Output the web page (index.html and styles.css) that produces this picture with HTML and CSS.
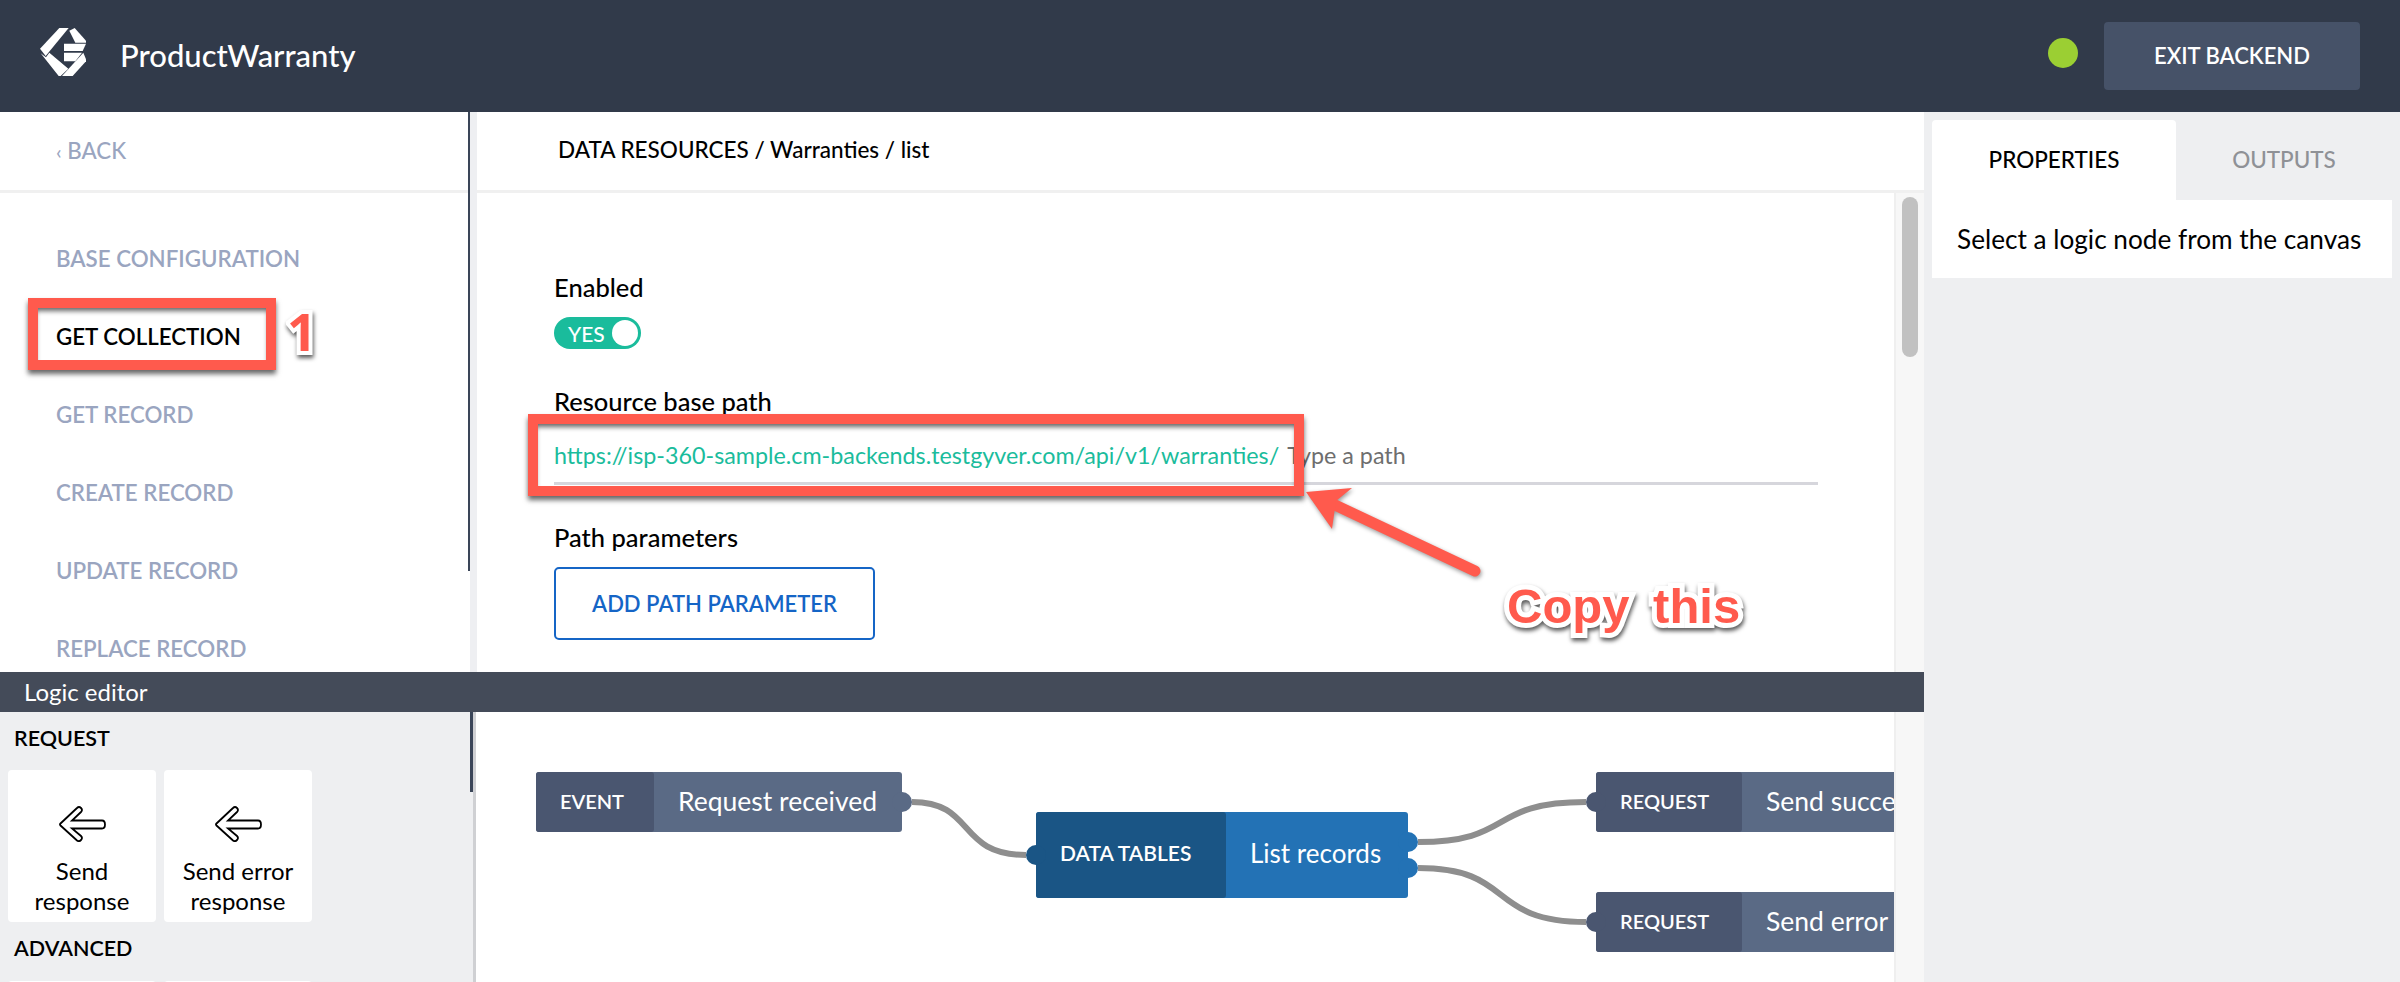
FILE: index.html
```html
<!DOCTYPE html>
<html lang="en">
<head>
    <meta charset="UTF-8">
    <title>ProductWarranty</title>
    <link rel="stylesheet" href="styles.css">
</head>
<body>
    <header class="topbar">
        <svg class="logo" viewBox="120 84 138 144" width="46" height="48" fill="#fff">
            <polygon points="178,84 206,84 137,168 120,146"/>
            <polygon points="122,160 138,172 148,158 205,206 182,228 176,228"/>
            <polygon points="208,92 224,84 258,122 258,128 226,128"/>
            <polygon points="192,131 258,131 248,153 192,153"/>
            <polygon points="192,158 246,158 226,184 192,184"/>
            <polygon points="250,158 258,178 258,184 218,228 186,228"/>
        </svg>
        <div class="app-name">ProductWarranty</div>
        <div class="status-dot"></div>
        <button class="exit-btn">EXIT BACKEND</button>
    </header>

    <div class="workspace">
        <div class="left-col">
            <div class="top-pane">
                <aside class="sidebar">
                    <div class="back-row"><span class="chev">‹</span> BACK</div>
                    <ul class="side-nav">
                        <li>BASE CONFIGURATION</li>
                        <li class="active">GET COLLECTION</li>
                        <li>GET RECORD</li>
                        <li>CREATE RECORD</li>
                        <li>UPDATE RECORD</li>
                        <li>REPLACE RECORD</li>
                    </ul>
                </aside>
                <main class="main">
                    <div class="crumbs">DATA RESOURCES / Warranties / list</div>
                    <div class="main-body">
                        <form class="form">
                            <div class="label">Enabled</div>
                            <div class="toggle"><span>YES</span><i></i></div>
                            <div class="label label-gap">Resource base path</div>
                            <div class="path-row">
                                <span class="path-base">https://isp-360-sample.cm-backends.testgyver.com/api/v1/warranties/</span>
                                <span class="path-hint">Type a path</span>
                            </div>
                            <div class="label label-next">Path parameters</div>
                            <button type="button" class="add-btn">ADD PATH PARAMETER</button>
                        </form>
                        <div class="track"><div class="thumb"></div></div>
                    </div>
                </main>
            </div>

            <div class="logic-bar">Logic editor</div>

            <div class="logic-pane">
                <div class="palette">
                    <h4>REQUEST</h4>
                    <div class="cards">
                        <div class="card">
                            <svg class="arrow-icon" viewBox="0 0 48 36" width="48" height="36"><path d="M19 2 L2.500 17.500 Q1.500 18.500 2.500 19.500 L19 34.500 Q21 36 23 34 Q25 32 23 30 L14 22.500 L44 22.500 Q47 22.500 47 18.500 Q47 14.500 44 14.500 L14 14.500 L23 6 Q25 4 23 2 Q21 0 19 2 Z" fill="#fff" stroke="#000" stroke-width="1.800"/></svg>
                            <div>Send<br>response</div>
                        </div>
                        <div class="card">
                            <svg class="arrow-icon" viewBox="0 0 48 36" width="48" height="36"><path d="M19 2 L2.500 17.500 Q1.500 18.500 2.500 19.500 L19 34.500 Q21 36 23 34 Q25 32 23 30 L14 22.500 L44 22.500 Q47 22.500 47 18.500 Q47 14.500 44 14.500 L14 14.500 L23 6 Q25 4 23 2 Q21 0 19 2 Z" fill="#fff" stroke="#000" stroke-width="1.800"/></svg>
                            <div>Send error<br>response</div>
                        </div>
                    </div>
                    <h4>ADVANCED</h4>
                    <div class="cards">
                        <div class="card"></div>
                        <div class="card"></div>
                    </div>
                </div>
                <div class="canvas">
                    <svg class="wires" width="1418" height="270">
                        <path d="M436 90 C500 90 480 143 550 143"/>
                        <path d="M942 130 C1040 130 1010 90 1110 90"/>
                        <path d="M942 156 C1040 156 1010 210 1110 210"/>
                    </svg>
                    <div class="node node-event">
                        <div class="node-kind">EVENT</div>
                        <div class="node-name">Request received</div>
                        <b class="port port-r"></b>
                    </div>
                    <div class="node node-data">
                        <div class="node-kind">DATA TABLES</div>
                        <div class="node-name">List records</div>
                        <b class="port port-l"></b>
                        <b class="port port-r1"></b>
                        <b class="port port-r2"></b>
                    </div>
                    <div class="node node-ok">
                        <div class="node-kind">REQUEST</div>
                        <div class="node-name">Send success response</div>
                        <b class="port port-l"></b>
                    </div>
                    <div class="node node-err">
                        <div class="node-kind">REQUEST</div>
                        <div class="node-name">Send error response</div>
                        <b class="port port-l"></b>
                    </div>
                </div>
                <div class="track track-low"></div>
            </div>
        </div>

        <aside class="right-col">
            <div class="tabs">
                <div class="tab tab-on">PROPERTIES</div>
                <div class="tab">OUTPUTS</div>
            </div>
            <div class="tab-body">Select a logic node from the canvas</div>
        </aside>
    </div>

    <!-- annotations drawn on top of the screenshot -->
    <div class="mark mark-nav"></div>
    <div class="mark mark-url"></div>
    <div class="note note-one">1</div>
    <div class="note note-copy">Copy this</div>
    <svg class="pointer" width="200" height="110" viewBox="1290 480 200 110">
        <path d="M1475 571 L1335 505" stroke="#ff5a4d" stroke-width="11" stroke-linecap="round" fill="none"/>
        <polygon points="1306,492 1352,488 1336,501 1332,529" fill="#ff5a4d"/>
    </svg>
</body>
</html>
```

FILE: styles.css
```css
* {
    margin: 0;
    padding: 0;
    box-sizing: border-box;
    list-style: none;
}
html, body {
    height: 982px;
    overflow: hidden;
}
body {
    font-family: "Lato", "Liberation Sans", sans-serif;
    color: #000;
    background: #fff;
    display: flex;
    flex-direction: column;
}

/* top bar */
.topbar {
    height: 112px;
    flex: none;
    background: #313a4a;
    display: flex;
    align-items: center;
    padding: 0 40px;
}
.logo {
    margin-top: -8px;
}
.app-name {
    margin: -3px 0 0 34px;
    flex: 1;
    font-size: 31px;
    font-weight: 500;
    color: #fff;
}
.status-dot {
    width: 30px;
    height: 30px;
    border-radius: 50%;
    background: #9bcf33;
    margin: -6px 26px 0 0;
}
.exit-btn {
    width: 256px;
    height: 68px;
    margin-top: -1px;
    border: 0;
    border-radius: 4px;
    background: #465268;
    color: #fff;
    font: 600 22px "Lato", sans-serif;
}

.workspace {
    flex: 1;
    display: flex;
    min-height: 0;
}
.left-col {
    width: 1924px;
    display: flex;
    flex-direction: column;
}
.right-col {
    flex: 1;
    background: #eeeff1;
    padding: 8px 8px 0;
}

/* form pane */
.top-pane {
    height: 560px;
    display: flex;
    background: #eeeff2;
    overflow: hidden;
}
.sidebar {
    width: 470px;
    height: 560px;
    flex: none;
    background: #fff;
    position: relative;
    overflow: hidden;
}
.sidebar::after {
    content: "";
    position: absolute;
    right: 0;
    top: 0;
    width: 2px;
    height: 459px;
    background: #3a4558;
}
.back-row {
    height: 81px;
    padding: 0 0 3px 56px;
    border-bottom: 3px solid #f0f0f0;
    line-height: 77px;
    font-size: 22.300px;
    font-weight: 500;
    color: #9aa5c0;
}
.chev {
    font-size: 20px;
}
.side-nav {
    padding-top: 27px;
}
.side-nav li {
    height: 78px;
    line-height: 78px;
    padding-left: 56px;
    font-size: 22.300px;
    font-weight: 600;
    color: #9aa5c0;
}
.side-nav li.active {
    color: #000;
}
.main {
    margin-left: 7px;
    flex: 1;
    background: #fff;
    display: flex;
    flex-direction: column;
}
.crumbs {
    height: 81px;
    flex: none;
    padding-left: 81px;
    border-bottom: 3px solid #f0f0f0;
    line-height: 76px;
    font-size: 22.500px;
    font-weight: 500;
}
.main-body {
    flex: 1;
    display: flex;
    min-height: 0;
}
.form {
    flex: 1;
    padding: 79px 0 0 77px;
}
.label {
    height: 30px;
    line-height: 30px;
    font-size: 25.500px;
    font-weight: 500;
}
.label-gap {
    margin-top: 37px;
}
.label-next {
    margin-top: 37px;
}
.toggle {
    width: 87px;
    height: 32px;
    margin-top: 15px;
    border-radius: 16px;
    background: #1abc9c;
    display: flex;
    align-items: center;
    justify-content: space-between;
    padding: 0 3px 0 14px;
    color: #fff;
    font-size: 21px;
    font-weight: 500;
}
.toggle i {
    width: 26px;
    height: 26px;
    border-radius: 50%;
    background: #fff;
}
.path-row {
    width: 1264px;
    height: 69px;
    border-bottom: 3px solid #d6d6dc;
    padding-top: 24px;
    line-height: 30px;
    font-size: 23.300px;
    white-space: nowrap;
}
.path-base {
    color: #1abc9c;
}
.path-hint {
    color: #6e6e6e;
    margin-left: 2px;
}
.add-btn {
    display: block;
    width: 321px;
    height: 73px;
    margin-top: 15px;
    border: 2px solid #1565c6;
    border-radius: 5px;
    background: #fff;
    color: #1565c6;
    font: 600 22px "Lato", sans-serif;
}
.track {
    width: 30px;
    flex: none;
    background: #f7f7f7;
    border-left: 2px solid #efefef;
    padding: 4px 0 0 6px;
}
.thumb {
    width: 16px;
    height: 160px;
    border-radius: 8px;
    background: #c1c1c1;
}

/* logic editor */
.logic-bar {
    height: 40px;
    flex: none;
    background: #444b59;
    color: #fff;
    padding-left: 24px;
    line-height: 40px;
    font-size: 24px;
}
.logic-pane {
    flex: 1;
    display: flex;
    min-height: 0;
}
.palette {
    width: 476px;
    flex: none;
    background: #eeeff1;
    position: relative;
    overflow: hidden;
    border-right: 3px solid #cfd0d3;
    padding: 12px 8px 0;
}
.palette::after {
    content: "";
    position: absolute;
    right: 0;
    top: 0;
    width: 3px;
    height: 80px;
    background: #3a4558;
}
.palette h4 {
    padding-left: 6px;
    line-height: 28px;
    font-size: 21.500px;
    font-weight: 600;
    margin-bottom: 18px;
}
.palette .cards + h4 {
    margin-top: 12px;
    margin-bottom: 19px;
}
.cards {
    display: flex;
    gap: 8px;
}
.card {
    width: 148px;
    height: 152px;
    flex: none;
    background: #fff;
    border-radius: 4px;
    text-align: center;
    font-size: 24px;
    line-height: 30px;
    padding-top: 36px;
}
.arrow-icon {
    display: block;
    margin: 0 auto 14px;
}
.canvas {
    flex: 1;
    background: #fff;
    position: relative;
    overflow: hidden;
}
.wires {
    position: absolute;
    left: 0;
    top: 0;
}
.wires path {
    fill: none;
    stroke: #8e8e8e;
    stroke-width: 6;
}
.node {
    position: absolute;
    display: flex;
    border-radius: 3px;
    color: #fff;
    white-space: nowrap;
    background: #5a6a85;
    height: 60px;
}
.node-kind {
    flex: none;
    background: #4a5670;
    border-radius: 3px;
    font-size: 20px;
    font-weight: 600;
    line-height: 58px;
    padding-left: 24px;
}
.node-name {
    font-size: 26.500px;
    line-height: 58px;
    padding-left: 24px;
}
.port {
    position: absolute;
    width: 20px;
    height: 20px;
    border-radius: 50%;
    background: inherit;
}
.node-event {
    left: 60px;
    top: 60px;
    width: 366px;
}
.node-event .node-kind {
    width: 118px;
}
.port-r {
    right: -10px;
    top: 20px;
    background: #5a6a85;
}
.node-data {
    left: 560px;
    top: 100px;
    width: 372px;
    height: 86px;
    background: #2372b5;
}
.node-data .node-kind {
    width: 190px;
    background: #1a5585;
    line-height: 82px;
    font-size: 21px;
}
.node-data .node-name {
    line-height: 82px;
    font-size: 26px;
}
.node-data .port-l {
    left: -10px;
    top: 33px;
    background: #1a5585;
}
.port-r1,
.port-r2 {
    right: -10px;
    background: #2372b5;
}
.port-r1 {
    top: 20px;
}
.port-r2 {
    top: 46px;
}
.node-ok,
.node-err {
    left: 1120px;
    width: 420px;
}
.node-ok {
    top: 60px;
}
.node-err {
    top: 180px;
}
.node-ok .node-kind,
.node-err .node-kind {
    width: 146px;
}
.node-ok .port-l,
.node-err .port-l {
    left: -10px;
    top: 20px;
    background: #4a5670;
}
.track-low {
    padding: 0;
}

/* right panel */
.tabs {
    display: flex;
    height: 80px;
}
.tab {
    flex: 1;
    text-align: center;
    line-height: 80px;
    font-size: 22.500px;
    font-weight: 500;
    color: #8f9196;
}
.tab-on {
    flex: none;
    width: 244px;
    background: #fff;
    border-radius: 4px 4px 0 0;
    color: #000;
}
.tab-body {
    height: 78px;
    background: #fff;
    padding-left: 25px;
    line-height: 78px;
    font-size: 26.200px;
}

/* annotations */
.mark {
    position: absolute;
    border: 10px solid #ff5a4d;
    box-shadow: 0 4px 5px rgba(0, 0, 0, .6), inset 0 5px 5px -2px rgba(0, 0, 0, .6);
}
.mark-nav {
    left: 28px;
    top: 298px;
    width: 248px;
    height: 72px;
}
.mark-url {
    left: 528px;
    top: 414px;
    width: 776px;
    height: 82px;
}
.note {
    position: absolute;
    font-family: "Liberation Sans", sans-serif;
    font-weight: 700;
    color: #ff5a4d;
    -webkit-text-stroke: 10px #fff;
    paint-order: stroke fill;
    filter: drop-shadow(1px 3px 2px rgba(0, 0, 0, .65));
    white-space: nowrap;
}
.note-one {
    left: 287px;
    top: 300px;
    font-family: "Open Sans", sans-serif;
    font-size: 52px;
    line-height: 62px;
    -webkit-text-stroke-width: 8px;
}
.note-copy {
    left: 1507px;
    top: 577px;
    font-size: 49px;
    line-height: 58px;
    word-spacing: 10px;
}
.pointer {
    position: absolute;
    left: 1290px;
    top: 480px;
    filter: drop-shadow(1px 2px 2px rgba(0, 0, 0, .4));
}
```
